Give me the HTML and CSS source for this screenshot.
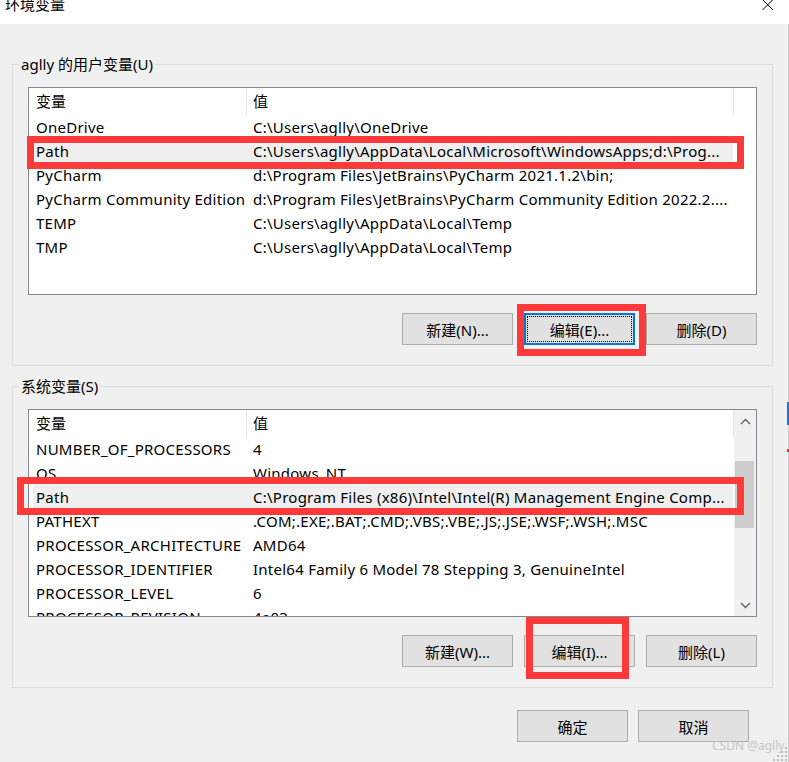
FILE: index.html
```html
<!DOCTYPE html>
<html lang="zh-CN">
<head>
    <meta charset="UTF-8">
    <title>环境变量</title>
    <link rel="stylesheet" href="styles.css">
</head>
<body>
    <div class="window">
        <div class="titlebar">
            <span class="title">环境变量</span>
            <svg class="close" width="12" height="12" viewBox="0 0 12 12">
                <path d="M0.5 0.5 L11 11 M11 0.5 L0.5 11" stroke="#000" stroke-width="1" fill="none"/>
            </svg>
        </div>

        <div class="client">
            <fieldset class="group">
                <legend>aglly 的用户变量(U)</legend>
                <div class="list">
                    <div class="list-main">
                        <div class="list-head">
                            <div class="head-name">变量</div>
                            <div class="head-value">值</div>
                        </div>
                        <div class="row"><div class="cell-name">OneDrive</div><div class="cell-value">C:\Users\aglly\OneDrive</div></div>
                        <div class="row selected"><div class="cell-name">Path</div><div class="cell-value">C:\Users\aglly\AppData\Local\Microsoft\WindowsApps;d:\Prog...</div></div>
                        <div class="row"><div class="cell-name">PyCharm</div><div class="cell-value">d:\Program Files\JetBrains\PyCharm 2021.1.2\bin;</div></div>
                        <div class="row"><div class="cell-name">PyCharm Community Edition</div><div class="cell-value">d:\Program Files\JetBrains\PyCharm Community Edition 2022.2....</div></div>
                        <div class="row"><div class="cell-name">TEMP</div><div class="cell-value">C:\Users\aglly\AppData\Local\Temp</div></div>
                        <div class="row"><div class="cell-name">TMP</div><div class="cell-value">C:\Users\aglly\AppData\Local\Temp</div></div>
                    </div>
                </div>
                <div class="buttons">
                    <button class="btn">新建(N)...</button>
                    <button class="btn focused">编辑(E)...</button>
                    <button class="btn">删除(D)</button>
                </div>
            </fieldset>

            <fieldset class="group">
                <legend>系统变量(S)</legend>
                <div class="list">
                    <div class="list-main">
                        <div class="list-head">
                            <div class="head-name">变量</div>
                            <div class="head-value">值</div>
                        </div>
                        <div class="row"><div class="cell-name">NUMBER_OF_PROCESSORS</div><div class="cell-value">4</div></div>
                        <div class="row"><div class="cell-name">OS</div><div class="cell-value">Windows_NT</div></div>
                        <div class="row selected"><div class="cell-name">Path</div><div class="cell-value">C:\Program Files (x86)\Intel\Intel(R) Management Engine Comp...</div></div>
                        <div class="row"><div class="cell-name">PATHEXT</div><div class="cell-value">.COM;.EXE;.BAT;.CMD;.VBS;.VBE;.JS;.JSE;.WSF;.WSH;.MSC</div></div>
                        <div class="row"><div class="cell-name">PROCESSOR_ARCHITECTURE</div><div class="cell-value">AMD64</div></div>
                        <div class="row"><div class="cell-name">PROCESSOR_IDENTIFIER</div><div class="cell-value">Intel64 Family 6 Model 78 Stepping 3, GenuineIntel</div></div>
                        <div class="row"><div class="cell-name">PROCESSOR_LEVEL</div><div class="cell-value">6</div></div>
                        <div class="row"><div class="cell-name">PROCESSOR_REVISION</div><div class="cell-value">4e03</div></div>
                    </div>
                    <div class="scrollbar">
                        <div class="sb-btn">
                            <svg width="11" height="7" viewBox="0 0 11 7"><path d="M1 6 L5.5 1.5 L10 6" stroke="#606060" stroke-width="1.4" fill="none"/></svg>
                        </div>
                        <div class="sb-track"><div class="sb-thumb"></div></div>
                        <div class="sb-btn">
                            <svg width="11" height="7" viewBox="0 0 11 7"><path d="M1 1 L5.5 5.5 L10 1" stroke="#606060" stroke-width="1.4" fill="none"/></svg>
                        </div>
                    </div>
                </div>
                <div class="buttons">
                    <button class="btn">新建(W)...</button>
                    <button class="btn">编辑(I)...</button>
                    <button class="btn">删除(L)</button>
                </div>
            </fieldset>

            <div class="dialog-buttons">
                <button class="btn">确定</button>
                <button class="btn">取消</button>
            </div>
        </div>

        <!-- red annotation boxes -->
        <div class="mark mark-user-path"></div>
        <div class="mark mark-user-edit"></div>
        <div class="mark mark-sys-path"></div>
        <div class="mark mark-sys-edit"></div>

        <span class="edge edge-blue"></span>
        <span class="edge edge-red"></span>

        <div class="watermark">CSDN @aglly</div>
        <svg class="grip" width="16" height="14" viewBox="0 0 16 14">
            <rect x="12" y="0" width="2" height="2" fill="#bdbdbd"/>
            <rect x="8" y="4" width="2" height="2" fill="#bdbdbd"/>
            <rect x="12" y="4" width="2" height="2" fill="#bdbdbd"/>
            <rect x="4" y="8" width="2" height="2" fill="#bdbdbd"/>
            <rect x="8" y="8" width="2" height="2" fill="#bdbdbd"/>
            <rect x="12" y="8" width="2" height="2" fill="#bdbdbd"/>
            <rect x="0" y="12" width="2" height="2" fill="#bdbdbd"/>
            <rect x="4" y="12" width="2" height="2" fill="#bdbdbd"/>
            <rect x="8" y="12" width="2" height="2" fill="#bdbdbd"/>
            <rect x="12" y="12" width="2" height="2" fill="#bdbdbd"/>
        </svg>
    </div>
</body>
</html>
```

FILE: styles.css
```css
* {
    box-sizing: border-box;
}
body {
    margin: 0;
    background: #fff;
    font-family: "Noto Sans", "Noto Sans CJK SC", sans-serif;
    font-size: 15px;
    color: #000;
}
.window {
    position: relative;
    width: 789px;
    height: 762px;
    background: #f0f0f0;
    overflow: hidden;
}
.titlebar {
    position: relative;
    height: 24px;
    background: #fff;
    overflow: hidden;
}
.title {
    display: block;
    margin: -6px 0 0 5px;
    line-height: 20px;
}
.close {
    position: absolute;
    left: 762px;
    top: -1px;
}
.client {
    height: 738px;
    padding: 30px 0 0 12px;
    border-right: 1px solid #cfcfcf;
}
.group {
    width: 761px;
    min-width: 0;
    margin: 0;
    padding: 13px 15px 20px;
    border: 1px solid #dcdcdc;
}
.group + .group {
    margin-top: 10px;
}
.group legend {
    margin-left: -9px;
    padding: 0 2px;
    line-height: 20px;
}
.list {
    display: flex;
    height: 208px;
    border: 1px solid #828790;
    background: #fff;
    overflow: hidden;
}
.list-main {
    flex: 1;
    overflow: hidden;
}
.list-head {
    display: flex;
    height: 27px;
    line-height: 27px;
}
.head-name {
    width: 218px;
    padding-left: 7px;
    border-right: 1px solid #e5e5e5;
}
.head-value {
    width: 487px;
    padding-left: 6px;
    border-right: 1px solid #e5e5e5;
}
.row {
    display: flex;
    width: 700px;
    height: 24px;
    margin-left: 4px;
    line-height: 24px;
    white-space: nowrap;
    letter-spacing: 0.25px;
}
.row.selected {
    background: #efefef;
}
.cell-name {
    width: 214px;
    padding-left: 3px;
    overflow: hidden;
}
.cell-value {
    flex: 1;
    padding-left: 6px;
    overflow: hidden;
}
.scrollbar {
    display: flex;
    flex-direction: column;
    width: 22px;
    background: #f0f0f0;
}
.sb-btn {
    display: flex;
    align-items: center;
    justify-content: center;
    height: 22px;
}
.sb-track {
    flex: 1;
}
.sb-thumb {
    height: 67px;
    margin: 29px 2px 0 1px;
    background: #cdcdcd;
}
.buttons {
    display: flex;
    justify-content: flex-end;
    gap: 11px;
    margin-top: 18px;
}
.btn {
    width: 111px;
    height: 32px;
    padding: 0;
    background: #e1e1e1;
    border: 1px solid #adadad;
    font: inherit;
    color: #000;
}
.btn.focused {
    border: 2px solid #0078d7;
    outline: 1px dotted #000;
    outline-offset: -4px;
}
.dialog-buttons {
    display: flex;
    justify-content: flex-end;
    gap: 10px;
    margin-top: 22px;
    padding-right: 39px;
}
.mark {
    position: absolute;
    border: 7px solid #fd3a3a;
}
.mark-user-path {
    left: 27px;
    top: 136px;
    width: 717px;
    height: 33px;
}
.mark-user-edit {
    left: 517px;
    top: 304px;
    width: 129px;
    height: 52px;
}
.mark-sys-path {
    left: 17px;
    top: 477px;
    width: 727px;
    height: 38px;
}
.mark-sys-edit {
    left: 526px;
    top: 617px;
    width: 103px;
    height: 62px;
}
.edge {
    position: absolute;
    left: 787px;
    width: 2px;
}
.edge-blue {
    top: 402px;
    height: 23px;
    background: #1a73e8;
}
.edge-red {
    top: 449px;
    height: 3px;
    background: #e53935;
}
.watermark {
    position: absolute;
    left: 712px;
    top: 737px;
    font-size: 12px;
    color: #c6c6c6;
}
.grip {
    position: absolute;
    left: 773px;
    top: 747px;
}
```
